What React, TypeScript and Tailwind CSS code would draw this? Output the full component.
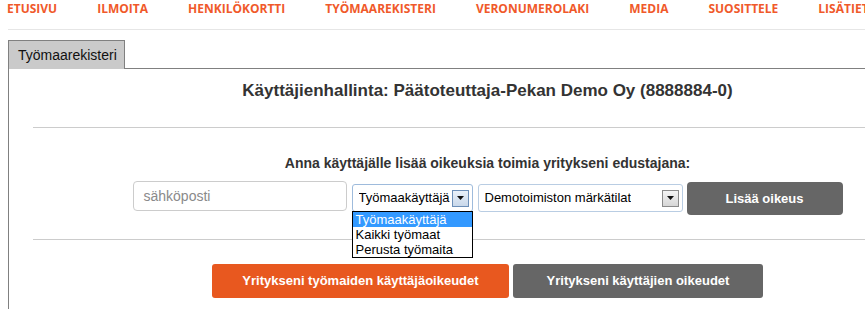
import { ReactNode } from 'react';

const navItems = [
  'ETUSIVU',
  'ILMOITA',
  'HENKILÖKORTTI',
  'TYÖMAAREKISTERI',
  'VERONUMEROLAKI',
  'MEDIA',
  'SUOSITTELE',
  'LISÄTIETOA',
];

function SelectArrow({ active }: { active?: boolean }) {
  return (
    <span
      className={
        active
          ? 'flex h-[17px] w-[17px] shrink-0 items-center justify-center border border-[#6d8fb8] bg-gradient-to-b from-[#eaf1f9] to-[#c9d8ea]'
          : 'flex h-[17px] w-[17px] shrink-0 items-center justify-center border border-[#8a8a8a] bg-gradient-to-b from-[#f4f4f4] to-[#d6d6d6]'
      }
    >
      <svg width="7" height="4" viewBox="0 0 7 4">
        <path d="M0 0h7L3.5 4z" fill="#111" />
      </svg>
    </span>
  );
}

function FakeSelect({
  value,
  width,
  active,
  children,
}: {
  value: string;
  width: string;
  active?: boolean;
  children?: ReactNode;
}) {
  return (
    <div className={`relative mt-[3px] ${width}`}>
      <div
        className={`flex h-[28px] items-center justify-between rounded-[3px] border bg-white pl-[6px] pr-[3px] text-[13px] text-black ${
          active ? 'border-[#9ebbdc]' : 'border-[#b9cde3]'
        }`}
      >
        <span className="truncate">{value}</span>
        <SelectArrow active={active} />
      </div>
      {children}
    </div>
  );
}

function OptionList() {
  const opts = ['Työmaakäyttäjä', 'Kaikki työmaat', 'Perusta työmaita'];
  return (
    <div className="absolute left-0 top-[27px] z-10 w-full border border-black bg-white text-left text-[13px] leading-[15px] text-black">
      {opts.map((o, i) => (
        <div
          key={o}
          className={i === 0 ? 'bg-[#3399ff] pl-[3px] text-white' : 'pl-[3px]'}
        >
          {o}
        </div>
      ))}
    </div>
  );
}

export default function App() {
  return (
    <div className="h-[309px] w-[865px] overflow-hidden bg-white font-['Liberation_Sans',Arial,sans-serif]">
      <div className="ml-[8px] w-[1100px] border-b border-[#e6e6e6]">
        <nav className="-ml-[1px] flex h-[29px] items-start gap-[40px] whitespace-nowrap pt-[1px] font-['Open_Sans',sans-serif] text-[12px] font-bold leading-[16px] text-[#f0592a]">
          {navItems.map((n) => (
            <span key={n}>{n}</span>
          ))}
        </nav>
      </div>

      <div className="ml-[8px] mt-[10px] w-[1000px]">
        <div className="flex">
          <div className="h-[29px] w-[117px] border border-b-0 border-[#808080] bg-[#cacaca] pl-[9px] pt-[5px] text-[14px] leading-[18px] text-[#111]">
            Työmaarekisteri
          </div>
          <div className="flex-1 border-b border-[#808080]" />
        </div>

        <div className="h-[300px] border-l border-[#808080]">
          <div className="ml-[24px] w-[909px] text-center">
            <h2 className="pt-[12px] text-[17px] font-bold leading-[20px] text-[#333]">
              Käyttäjienhallinta: Päätoteuttaja-Pekan Demo Oy (8888884-0)
            </h2>
            <div className="mt-[26px] h-[1px] bg-[#cccccc]" />
            <h3 className="mt-[26px] text-[14px] font-bold leading-[18px] text-[#333]">
              Anna käyttäjälle lisää oikeuksia toimia yritykseni edustajana:
            </h3>

            <div className="mt-[9px] flex h-[34px] items-start justify-center">
              <div className="flex h-[30px] w-[214px] items-center rounded-[4px] border border-[#cccccc] bg-white pl-[10px] text-[14px] text-[#8a8a8a]">
                sähköposti
              </div>
              <div className="w-[5px]" />
              <FakeSelect value="Työmaakäyttäjä" width="w-[121px]" active>
                <OptionList />
              </FakeSelect>
              <div className="w-[5px]" />
              <FakeSelect value="Demotoimiston märkätilat" width="w-[205px]" />
              <div className="w-[4px]" />
              <button className="mt-[1px] h-[33px] w-[156px] rounded-[4px] bg-[#666666] text-[13px] font-bold text-white">
                Lisää oikeus
              </button>
            </div>

            <div className="mt-[24px] h-[1px] bg-[#cccccc]" />

            <div className="mt-[24px] flex justify-center gap-[4px]">
              <button className="h-[34px] w-[297px] rounded-[3px] bg-[#e8581f] text-[13px] font-bold text-white">
                Yritykseni työmaiden käyttäjäoikeudet
              </button>
              <button className="h-[34px] w-[250px] rounded-[3px] bg-[#666666] text-[13px] font-bold text-white">
                Yritykseni käyttäjien oikeudet
              </button>
            </div>
          </div>
        </div>
      </div>
    </div>
  );
}
